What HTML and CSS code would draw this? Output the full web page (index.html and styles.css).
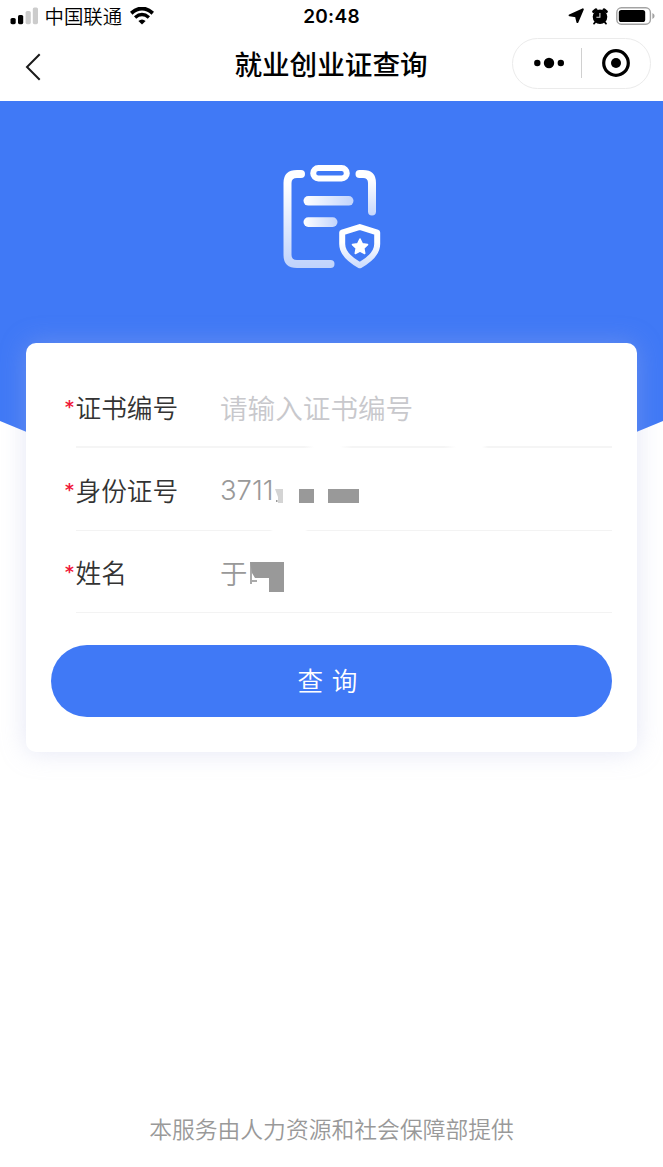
FILE: index.html
```html
<!DOCTYPE html>
<html lang="zh-CN">
<head>
    <meta charset="UTF-8">
    <meta name="viewport" content="width=device-width, initial-scale=1.0">
    <title>就业创业证查询</title>
    <link rel="stylesheet" href="styles.css">
</head>
<body>

    <div class="status-bar">
        <div class="status-left">
            <svg class="signal" width="28" height="18" viewBox="0 0 28 18">
                <rect x="0.5" y="11" width="5.2" height="6.2" rx="1.6" fill="#000"/>
                <rect x="8" y="8" width="5.2" height="9.2" rx="1.6" fill="#000"/>
                <rect x="15.6" y="4" width="5.2" height="13.2" rx="1.6" fill="#ccc"/>
                <rect x="22.8" y="0.5" width="5.2" height="16.7" rx="1.6" fill="#ccc"/>
            </svg>
            <span class="carrier">中国联通</span>
            <svg class="wifi" width="24" height="18" viewBox="0 0 24 18">
                <path d="M1.2 6.2Q12-3.2 22.8 6.2" fill="none" stroke="#000" stroke-width="3.8"/>
                <path d="M5.1 10.5Q12 4.6 18.9 10.5" fill="none" stroke="#000" stroke-width="3.4"/>
                <path d="M8.4 14Q12 10.8 15.6 14L12 17.6Z" fill="#000"/>
            </svg>
        </div>
        <span class="time">20:48</span>
        <div class="status-right">
            <svg width="16" height="16" viewBox="0 0 16 16">
                <path d="M14.8 1.4 9.4 14 8 8.3 1.6 7.3Z" fill="#000" stroke="#000" stroke-width="2" stroke-linejoin="round"/>
            </svg>
            <svg width="16" height="17" viewBox="0 0 16 17">
                <path d="M1.6 3.6 4 1.7M14.4 3.6 12 1.7" stroke="#000" stroke-width="2.8" stroke-linecap="round"/>
                <path d="M3.4 14 2 15.6M12.6 14 14 15.6" stroke="#000" stroke-width="1.8" stroke-linecap="round"/>
                <circle cx="8" cy="8.8" r="7.3" fill="#000"/>
                <path d="M7.9 5V9.2H4.4" fill="none" stroke="#ddd" stroke-width="1.1"/>
            </svg>
            <svg width="39" height="18" viewBox="0 0 39 18">
                <rect x="0.8" y="0.8" width="33.6" height="16.4" rx="4.6" fill="none" stroke="#a3a3a3" stroke-width="1.4"/>
                <rect x="2.8" y="3" width="26.4" height="12" rx="2.6" fill="#000"/>
                <path d="M36.4 6Q38.6 7 38.6 9T36.4 12Z" fill="#a3a3a3"/>
            </svg>
        </div>
    </div>

    <div class="nav-bar">
        <svg class="back" width="16" height="28" viewBox="0 0 16 28">
            <path d="M14.7 1.2 2 14 14.7 26.8" fill="none" stroke="#1a1a1a" stroke-width="2"/>
        </svg>
        <h1>就业创业证查询</h1>
        <div class="capsule">
            <svg width="32" height="12" viewBox="0 0 32 12">
                <circle cx="4.3" cy="6" r="3.2"/>
                <circle cx="16" cy="6" r="5.2"/>
                <circle cx="27.8" cy="6" r="3.2"/>
            </svg>
            <span class="divider"></span>
            <svg width="28" height="28" viewBox="0 0 28 28">
                <circle cx="14" cy="14" r="12.3" fill="none" stroke="#000" stroke-width="3.2"/>
                <circle cx="14" cy="14" r="5"/>
            </svg>
        </div>
    </div>

    <div class="banner">
        <svg width="99" height="106" viewBox="0 0 99 106">
            <defs>
                <linearGradient id="fadeDown" gradientUnits="userSpaceOnUse" x1="0" y1="20" x2="0" y2="106">
                    <stop offset="0" stop-color="#fff"/>
                    <stop offset="1" stop-color="#fff" stop-opacity="0.66"/>
                </linearGradient>
                <linearGradient id="fadeSide" gradientUnits="userSpaceOnUse" x1="0" y1="6" x2="0" y2="52">
                    <stop offset="0.2" stop-color="#fff"/>
                    <stop offset="1" stop-color="#fff" stop-opacity="0.7"/>
                </linearGradient>
                <linearGradient id="fadeRight">
                    <stop offset="0" stop-color="#fff"/>
                    <stop offset="1" stop-color="#fff" stop-opacity="0.68"/>
                </linearGradient>
                <linearGradient id="fadeShield" x1="0" y1="0" x2="0" y2="1">
                    <stop offset="0.4" stop-color="#fff"/>
                    <stop offset="1" stop-color="#fff" stop-opacity="0.75"/>
                </linearGradient>
            </defs>
            <path d="M19 10H15Q5.5 10 5.5 19V91Q5.5 100 15 100H48.5" fill="none" stroke="url(#fadeDown)" stroke-width="8" stroke-linecap="round"/>
            <path d="M77.5 10H81Q90 10 90 19V47.5" fill="none" stroke="url(#fadeSide)" stroke-width="8" stroke-linecap="round"/>
            <rect x="31.2" y="4" width="33.6" height="10.4" rx="5.2" fill="none" stroke="#fff" stroke-width="6"/>
            <rect x="21.5" y="32" width="50" height="9.6" rx="4.8" fill="url(#fadeRight)"/>
            <rect x="21.5" y="53.3" width="34" height="9.6" rx="4.8" fill="url(#fadeRight)"/>
            <path d="M77.8 63 95.2 68.5V80Q95.2 91.5 77.8 101.3 60.2 91.5 60.2 80V68.5Z" fill="none" stroke="url(#fadeShield)" stroke-width="6" stroke-linejoin="round"/>
            <path d="M78 75 80.3 79.8 85.5 80.6 81.8 84.3 82.7 89.5 78 87.1 73.3 89.5 74.2 84.3 70.5 80.6 75.7 79.8Z" fill="#fff" stroke="#fff" stroke-width="1.6" stroke-linejoin="round"/>
        </svg>
    </div>

    <div class="card">
        <div class="field">
            <label><i>*</i>证书编号</label>
            <input type="text" placeholder="请输入证书编号">
        </div>
        <div class="field">
            <label><i>*</i>身份证号</label>
            <span class="value">3711</span>
            <svg class="mask-id" width="85" height="16" viewBox="0 0 85 16">
                <path d="M1 0H9V14H4V8Z" fill="#d4d4d4"/>
                <rect x="2" y="11" width="1.5" height="2" fill="#999"/>
                <rect x="25" y="0" width="15" height="14" fill="#999"/>
                <rect x="54" y="0" width="31" height="14" fill="#999"/>
            </svg>
        </div>
        <div class="field">
            <label><i>*</i>姓名</label>
            <span class="value">于</span>
            <svg class="mask-name" width="34" height="30" viewBox="0 0 34 30">
                <path d="M1 0V22M2 19H7" fill="none" stroke="#aaa" stroke-width="2"/>
                <path d="M0 0H34V30H19V16H5L2 11Z" fill="#999"/>
            </svg>
        </div>
        <button class="submit-btn">查 询</button>
    </div>

    <p class="footer">本服务由人力资源和社会保障部提供</p>

</body>
</html>
```

FILE: styles.css
```css
* {
    box-sizing: border-box;
}
body {
    margin: 0;
    height: 1167px;
    display: flex;
    flex-direction: column;
    overflow: hidden;
    background-color: #fff;
    font-family: "Liberation Sans", "Noto Sans CJK SC", sans-serif;
    color: #333;
}
svg {
    display: block;
    flex: none;
}

/* Status bar */
.status-bar {
    height: 33px;
    flex: none;
    display: grid;
    grid-template-columns: 1fr auto 1fr;
    align-items: center;
    padding: 0 8px 1px 10px;
    color: #000;
}
.status-left {
    display: flex;
    align-items: center;
}
.carrier {
    margin: 0 8px 0 6.5px;
    font-family: "Noto Sans CJK SC", sans-serif;
    font-size: 19.4px;
    font-weight: 350;
    line-height: 30px;
}
.time {
    margin-right: 2px;
    font-family: Inter, sans-serif;
    font-size: 19px;
    font-weight: 600;
    letter-spacing: 0.3px;
}
.status-right {
    display: flex;
    align-items: center;
    justify-content: flex-end;
    gap: 8px;
}

/* Title bar */
.nav-bar {
    height: 68px;
    flex: none;
    display: grid;
    grid-template-columns: 1fr auto 1fr;
    align-items: center;
    padding: 0 12px 8px 25px;
}
.nav-bar h1 {
    margin: 0 14px 0 0;
    font-family: "Noto Sans CJK SC", sans-serif;
    font-size: 27.6px;
    line-height: 40px;
    font-weight: 500;
    color: #000;
}
.back {
    margin-top: 7px;
}
.capsule {
    justify-self: end;
    width: 139px;
    height: 51px;
    display: flex;
    align-items: center;
    padding: 0 0 0 20px;
    border: 1px solid #ebebeb;
    border-radius: 26px;
}
.divider {
    width: 1px;
    height: 30px;
    margin: 0 20px 0 16px;
    background-color: #d0d0d0;
}

/* Blue header */
.banner {
    height: 347px;
    flex: none;
    display: flex;
    justify-content: center;
    padding-top: 63px;
    background-color: #4079f6;
    clip-path: polygon(0 0, 100% 0, 100% 320px, 600px 346px, 63px 346px, 0 320px);
}

/* Form */
.card {
    position: relative;
    height: 409px;
    flex: none;
    margin: -105px 26px 0;
    padding: 23px 25px 0;
    border-radius: 10px;
    background-color: #fff;
    box-shadow: 0 0 26px rgba(175, 182, 225, 0.34);
}
.field {
    height: 82.4px;
    display: flex;
    align-items: center;
    margin-left: 13px;
    background: linear-gradient(#f3f3f3, #f3f3f3) right bottom / 536px 1px no-repeat;
}
.field:first-child {
    background:
        linear-gradient(90deg, #f5f5f5 228px, #fff 238px, #fff 264px, #f5f5f5 276px, #f5f5f5 368px, #fff 380px, #fff 406px, #f5f5f5 412px) right bottom / 536px 2px no-repeat;
}
.field:nth-child(2) {
    background:
        linear-gradient(90deg, #f3f3f3 194px, #fff 197px, #fff 229px, #f3f3f3 232px) right bottom / 536px 1px no-repeat;
}
.field label {
    width: 156px;
    flex: none;
    font-family: "Noto Sans CJK SC", sans-serif;
    font-size: 25.7px;
    font-weight: 350;
    line-height: 38px;
    white-space: nowrap;
}
.field label i {
    display: inline-block;
    width: 11.5px;
    padding-left: 1px;
    font-family: "DejaVu Sans", sans-serif;
    font-size: 17px;
    font-style: normal;
    font-weight: 700;
    line-height: 1;
    vertical-align: 5px;
    color: #f0183a;
}
.field input {
    width: 380px;
    padding: 0;
    border: none;
    outline: none;
    background: none;
    font-family: "Noto Sans CJK SC", sans-serif;
    font-size: 27.6px;
    font-weight: 350;
}
.field input::placeholder {
    color: #c8c8cc;
}
.value {
    padding-top: 1px;
    font-family: Inter, "Noto Sans CJK SC", sans-serif;
    font-size: 27.4px;
    font-weight: 350;
    color: #999;
}
.mask-id {
    margin: 14px 0 0 1px;
}
.mask-name {
    margin: 10px 0 0 3px;
}
.submit-btn {
    display: block;
    width: 561px;
    height: 72px;
    margin-top: 32px;
    padding: 0 8px 3px 0;
    border: none;
    border-radius: 36px;
    background-color: #4079f6;
    color: #fff;
    font-family: "Noto Sans CJK SC", sans-serif;
    font-size: 25.6px;
    font-weight: 350;
    word-spacing: 3px;
}

.footer {
    margin: auto 0 21px;
    text-align: center;
    font-family: "Noto Sans CJK SC", sans-serif;
    font-size: 22.8px;
    line-height: 34px;
    font-weight: 350;
    color: #999;
}
```
